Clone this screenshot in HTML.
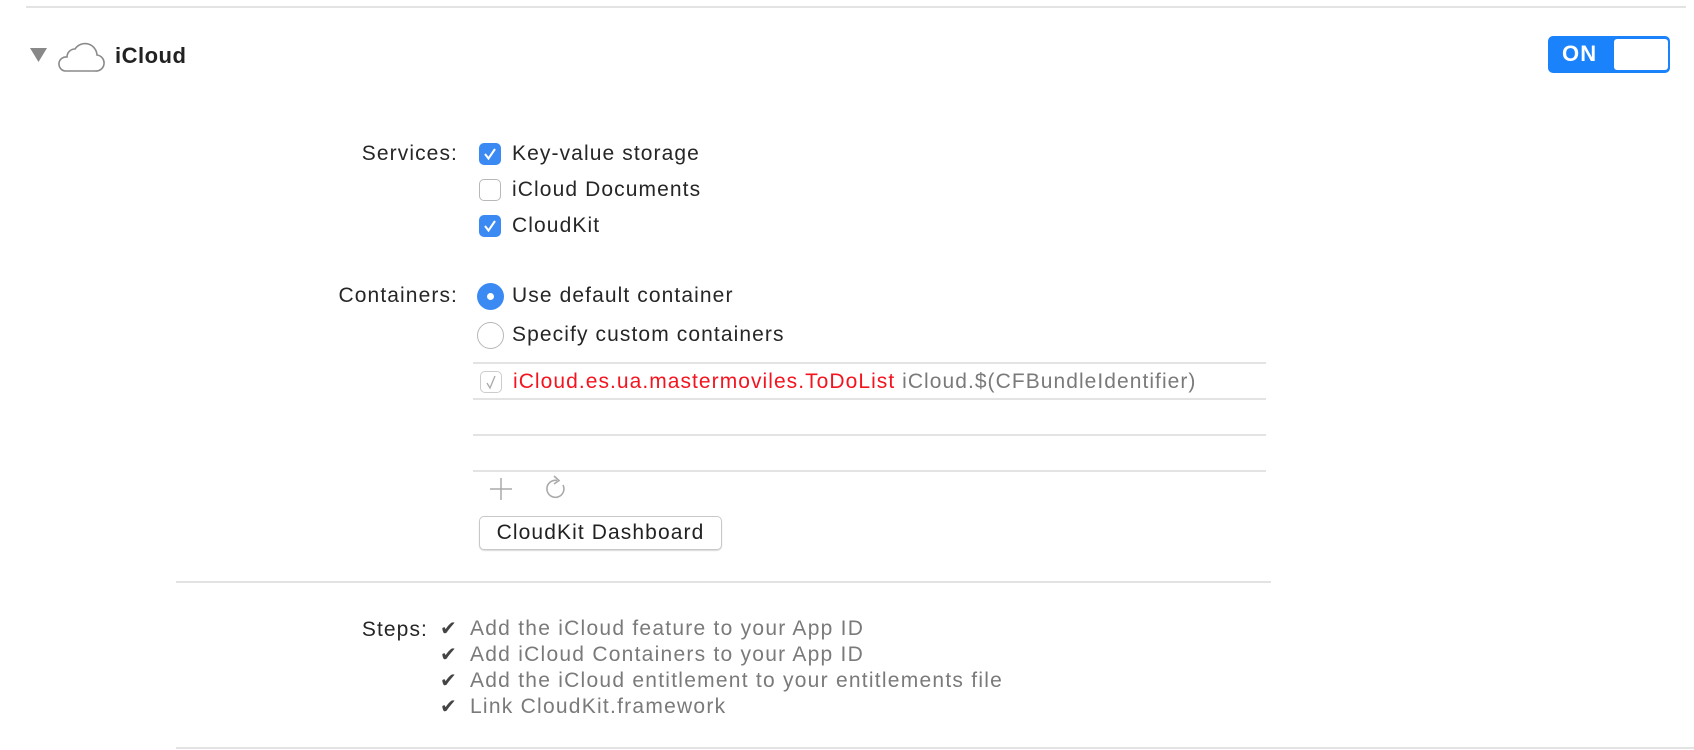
<!DOCTYPE html>
<html><head><meta charset="utf-8"><style>
body{margin:0;width:1694px;height:750px;background:#fff;position:relative;overflow:hidden;font-family:"Liberation Sans",Helvetica,sans-serif;color:#262626}
.a{position:absolute}
.l{position:absolute;height:2px;background:#e3e3e3}
.t{position:absolute;font-size:21px;letter-spacing:1.1px;white-space:nowrap;line-height:24px}
.cb{position:absolute;width:22px;height:22px;border-radius:5px;box-sizing:border-box}
.on{background:#3b8af4}
.off{border:1px solid #b8b8b8;background:#fff}
.st{position:absolute;font-size:21px;letter-spacing:1.25px;color:#7a7a7a;white-space:nowrap;line-height:26px;left:470px}
.ck{position:absolute;left:440px;font-size:20px;color:#444;line-height:26px}
</style></head><body>
<div class="l" style="left:26px;top:6px;width:1660px"></div>
<svg class="a" style="left:30px;top:48px" width="18" height="15"><polygon points="0,0 17,0 8.5,14" fill="#888"/></svg>
<svg class="a" style="left:55px;top:39px" width="50" height="34"><path d="M10 32 H40 A8 8 0 0 0 42 16 A12 12 0 0 0 20 10 A8 8 0 0 0 12 18 A7 7 0 0 0 10 32 Z" fill="none" stroke="#8a8a8a" stroke-width="1.6"/></svg>
<div class="t" style="left:115px;top:44px;font-size:22px;letter-spacing:0.5px;font-weight:bold;color:#222">iCloud</div>
<div class="a" style="left:1548px;top:36px;width:122px;height:37px;background:#1a82fb;border-radius:5px"></div>
<div class="a" style="left:1614px;top:39px;width:54px;height:31px;background:#fff;border-radius:3px"></div>
<div class="t" style="left:1562px;top:42px;font-size:22px;font-weight:bold;color:#fff">ON</div>

<div class="t" style="left:280px;width:178px;text-align:right;top:142px">Services:</div>
<div class="cb on" style="left:479px;top:143px"><svg width="22" height="22"><path d="M6 11 L9.5 15.5 L16 6" fill="none" stroke="#fff" stroke-width="2"/></svg></div>
<div class="t" style="left:512px;top:142px">Key-value storage</div>
<div class="cb off" style="left:479px;top:179px"></div>
<div class="t" style="left:512px;top:178px">iCloud Documents</div>
<div class="cb on" style="left:479px;top:215px"><svg width="22" height="22"><path d="M6 11 L9.5 15.5 L16 6" fill="none" stroke="#fff" stroke-width="2"/></svg></div>
<div class="t" style="left:512px;top:214px">CloudKit</div>

<div class="t" style="left:280px;width:178px;text-align:right;top:284px">Containers:</div>
<div class="a" style="left:477px;top:283px;width:27px;height:27px;border-radius:50%;background:#3b8af4"></div>
<div class="a" style="left:487px;top:293px;width:7px;height:7px;border-radius:50%;background:#fff"></div>
<div class="t" style="left:512px;top:284px">Use default container</div>
<div class="a" style="left:477px;top:322px;width:27px;height:27px;border-radius:50%;border:1px solid #b8b8b8;box-sizing:border-box"></div>
<div class="t" style="left:512px;top:323px">Specify custom containers</div>

<div class="l" style="left:473px;top:362px;width:793px"></div>
<div class="cb off" style="left:480px;top:371px;border-color:#ccc"><svg width="22" height="22"><path d="M6 11 L9 16 L14 4" fill="none" stroke="#aaa" stroke-width="1.3"/></svg></div>
<div class="t" style="left:513px;top:370px;color:#f4141f;letter-spacing:1.05px">iCloud.es.ua.mastermoviles.ToDoList <span style="color:#7a7a7a">iCloud.$(CFBundleIdentifier)</span></div>
<div class="l" style="left:473px;top:398px;width:793px"></div>
<div class="l" style="left:473px;top:434px;width:793px"></div>
<div class="l" style="left:473px;top:470px;width:793px"></div>
<svg class="a" style="left:489px;top:477px" width="24" height="24"><path d="M12 1V23M1 12H23" stroke="#aaa" stroke-width="1.5"/></svg>
<svg class="a" style="left:544px;top:473px" width="26" height="30"><path d="M19 12 A8.5 8.5 0 1 1 13 7.5" fill="none" stroke="#aaa" stroke-width="1.6"/><path d="M10 3 L15 7.5 L10 11" fill="none" stroke="#aaa" stroke-width="1.6"/></svg>
<div class="a" style="left:479px;top:516px;width:243px;height:34px;border:1px solid #c8c8c8;border-radius:5px;box-sizing:border-box;box-shadow:0 1px 1px rgba(0,0,0,.15)"></div>
<div class="t" style="left:479px;width:243px;text-align:center;top:521px;color:#222">CloudKit Dashboard</div>

<div class="l" style="left:176px;top:581px;width:1095px"></div>
<div class="t" style="left:280px;width:148px;text-align:right;top:617px;line-height:26px">Steps:</div>
<div class="ck" style="top:616px">✔</div><div class="st" style="top:616px">Add the iCloud feature to your App ID</div>
<div class="ck" style="top:642px">✔</div><div class="st" style="top:642px">Add iCloud Containers to your App ID</div>
<div class="ck" style="top:668px">✔</div><div class="st" style="top:668px">Add the iCloud entitlement to your entitlements file</div>
<div class="ck" style="top:694px">✔</div><div class="st" style="top:694px">Link CloudKit.framework</div>
<div class="l" style="left:176px;top:747px;width:1518px"></div>
</body></html>
